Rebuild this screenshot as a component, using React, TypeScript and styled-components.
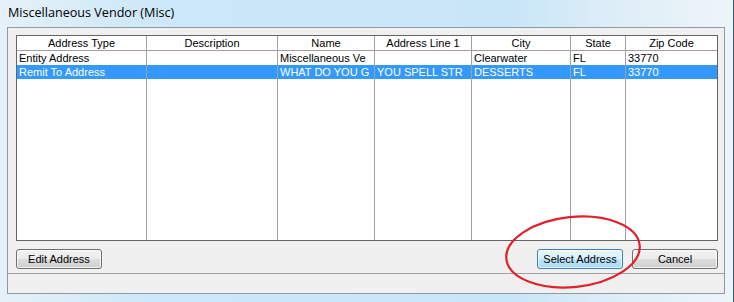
import React from 'react';
import styled, { createGlobalStyle } from 'styled-components';

const GlobalStyle = createGlobalStyle`
  html, body {
    margin: 0;
    padding: 0;
    background: #c6e2f4;
  }
`;

const Frame = styled.div`
  position: relative;
  width: 734px;
  height: 302px;
  box-sizing: border-box;
  display: flex;
  flex-direction: column;
  padding: 0 8px 8px 7px;
  background: linear-gradient(90deg, #e6f1f8 0%, #cde8f8 20%, #c9e6f8 70%, #dfeef7 85%, #eef5f9 100%);
  border-right: 1px solid #2b5f6e;
  overflow: hidden;
`;

const TitleBar = styled.div`
  height: 28px;
  box-sizing: border-box;
  display: flex;
  align-items: center;
  padding: 0 0 3px 1px;
  font-family: 'Open Sans', 'Noto Sans', sans-serif;
  font-size: 12.6px;
  color: #000;
`;

const Client = styled.div`
  flex: 1;
  display: flex;
  flex-direction: column;
  background: #f0f0f0;
  border: 1px solid #8d9ba5;
  font-family: 'Liberation Sans', Arial, sans-serif;
  font-size: 11px;
`;

const Body = styled.div`
  flex: 1;
  display: flex;
  flex-direction: column;
  padding: 7px 6px 4px 8px;
`;

const Grid = styled.div`
  height: 206px;
  box-sizing: border-box;
  border: 1px solid #646464;
  background: #fff;
  display: grid;
  grid-template-columns: 130px 131px 97px 97px 99px 55px 1fr;
  grid-template-rows: 15px 14px 14px 1fr;
`;

const HeaderCell = styled.div<{ $last?: boolean }>`
  border-right: ${(p) => (p.$last ? 'none' : '1px solid #a0a0a0')};
  border-bottom: 1px solid #a0a0a0;
  text-align: center;
  line-height: 15px;
  color: #000;
  white-space: nowrap;
  overflow: hidden;
`;

const Cell = styled.div<{ $selected?: boolean; $last?: boolean }>`
  border-right: ${(p) => (p.$last ? 'none' : '1px solid #a0a0a0')};
  background: ${(p) => (p.$selected ? '#3399ff' : '#fff')};
  color: ${(p) => (p.$selected ? '#fff' : '#000')};
  line-height: 15px;
  padding-left: 2px;
  white-space: nowrap;
  overflow: hidden;
`;

const ButtonRow = styled.div`
  display: flex;
  align-items: center;
  gap: 9px;
  margin-top: 8px;
`;

const Spacer = styled.div`
  flex: 1;
`;

const Button = styled.button<{ $focused?: boolean }>`
  width: 86px;
  height: 20px;
  padding: 0;
  font-family: 'Liberation Sans', Arial, sans-serif;
  font-size: 11px;
  color: #000;
  border-radius: 3px;
  border: 1px solid ${(p) => (p.$focused ? '#3c7fb1' : '#707070')};
  background: ${(p) =>
    p.$focused
      ? 'linear-gradient(#eaf6fd 0%, #d9f0fc 50%, #bee6fd 50%, #a7d9f5 100%)'
      : 'linear-gradient(#f2f2f2 0%, #ebebeb 50%, #dddddd 50%, #cfcfcf 100%)'};
  box-shadow: inset 0 0 0 1px rgba(255, 255, 255, 0.7);
`;

const StatusBar = styled.div`
  height: 19px;
  border-top: 1px solid #a0a0a0;
  background: #f0f0f0;
`;

const Annotation = styled.svg`
  position: absolute;
  left: 500px;
  top: 212px;
  width: 150px;
  height: 82px;
  pointer-events: none;
`;

const columns = ['Address Type', 'Description', 'Name', 'Address Line 1', 'City', 'State', 'Zip Code'];

const rows = [
  { cells: ['Entity Address', '', 'Miscellaneous Ve', '', 'Clearwater', 'FL', '33770'], selected: false },
  { cells: ['Remit To Address', '', 'WHAT DO YOU G', 'YOU SPELL STR', 'DESSERTS', 'FL', '33770'], selected: true },
  { cells: ['', '', '', '', '', '', ''], selected: false },
];

export default function App() {
  return (
    <>
      <GlobalStyle />
      <Frame>
        <TitleBar>Miscellaneous Vendor (Misc)</TitleBar>
        <Client>
          <Body>
            <Grid>
              {columns.map((c, i) => (
                <HeaderCell key={c} $last={i === columns.length - 1}>
                  {c}
                </HeaderCell>
              ))}
              {rows.map((r, ri) =>
                r.cells.map((c, ci) => (
                  <Cell key={`${ri}-${ci}`} $selected={r.selected} $last={ci === columns.length - 1}>
                    {c}
                  </Cell>
                ))
              )}
            </Grid>
            <ButtonRow>
              <Button>Edit Address</Button>
              <Spacer />
              <Button $focused>Select Address</Button>
              <Button>Cancel</Button>
            </ButtonRow>
          </Body>
          <StatusBar />
        </Client>
        <Annotation viewBox="0 0 150 82">
          <ellipse
            cx="73"
            cy="40"
            rx="67"
            ry="35"
            transform="rotate(-6 73 40)"
            fill="none"
            stroke="#e0202a"
            strokeWidth="2.2"
          />
        </Annotation>
      </Frame>
    </>
  );
}
